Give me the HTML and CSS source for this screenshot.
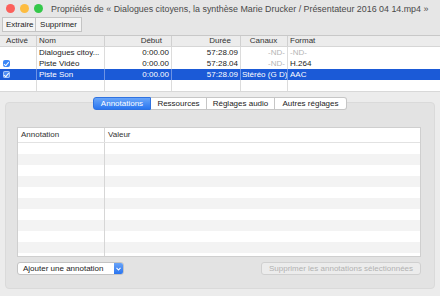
FILE: index.html
```html
<!doctype html>
<html lang="fr">

<head>
    <meta charset="UTF-8" />
    <title>Propriétés</title>
    <link rel="stylesheet" href="styles.css">
</head>

<body>
    <div class="window">
        <div class="titlebar">
            <div class="lights">
                <span class="light red"></span>
                <span class="light yellow"></span>
                <span class="light green"></span>
            </div>
            <div class="title">Propriétés de « Dialogues citoyens, la synthèse Marie Drucker / Présentateur 2016 04 14.mp4 »</div>
        </div>

        <div class="toolbar">
            <button class="tool">Extraire</button><button class="tool">Supprimer</button>
        </div>

        <div class="tracks">
            <div class="track-row head">
                <div class="c-on center">Activé</div>
                <div class="c-name">Nom</div>
                <div class="c-start right">Début</div>
                <div class="c-dur right">Durée</div>
                <div class="c-chan center">Canaux</div>
                <div class="c-fmt">Format</div>
            </div>
            <div class="track-row">
                <div class="c-on"></div>
                <div class="c-name">Dialogues citoy...</div>
                <div class="c-start right">0:00.00</div>
                <div class="c-dur right">57:28.09</div>
                <div class="c-chan right muted">-ND-</div>
                <div class="c-fmt muted">-ND-</div>
            </div>
            <div class="track-row">
                <div class="c-on"><span class="check"></span></div>
                <div class="c-name">Piste Vidéo</div>
                <div class="c-start right">0:00.00</div>
                <div class="c-dur right">57:28.04</div>
                <div class="c-chan right muted">-ND-</div>
                <div class="c-fmt">H.264</div>
            </div>
            <div class="track-row selected">
                <div class="c-on"><span class="check"></span></div>
                <div class="c-name">Piste Son</div>
                <div class="c-start right">0:00.00</div>
                <div class="c-dur right">57:28.09</div>
                <div class="c-chan">Stéréo (G D)</div>
                <div class="c-fmt">AAC</div>
            </div>
            <div class="track-row">
                <div class="c-on"></div>
                <div class="c-name"></div>
                <div class="c-start"></div>
                <div class="c-dur"></div>
                <div class="c-chan"></div>
                <div class="c-fmt"></div>
            </div>
        </div>

        <div class="lower">
            <div class="tabs">
                <span class="tab active">Annotations</span><span class="tab t-res">Ressources</span><span class="tab t-audio">Réglages audio</span><span class="tab t-other">Autres réglages</span>
            </div>
            <div class="group">
                <div class="annots">
                    <div class="annot-row head">
                        <div class="a-key">Annotation</div>
                        <div class="a-val">Valeur</div>
                    </div>
                    <div class="annot-row"><div class="a-key"></div><div class="a-val"></div></div>
                    <div class="annot-row"><div class="a-key"></div><div class="a-val"></div></div>
                    <div class="annot-row"><div class="a-key"></div><div class="a-val"></div></div>
                    <div class="annot-row"><div class="a-key"></div><div class="a-val"></div></div>
                    <div class="annot-row"><div class="a-key"></div><div class="a-val"></div></div>
                    <div class="annot-row"><div class="a-key"></div><div class="a-val"></div></div>
                    <div class="annot-row"><div class="a-key"></div><div class="a-val"></div></div>
                    <div class="annot-row"><div class="a-key"></div><div class="a-val"></div></div>
                    <div class="annot-row"><div class="a-key"></div><div class="a-val"></div></div>
                    <div class="annot-row"><div class="a-key"></div><div class="a-val"></div></div>
                    <div class="annot-row"><div class="a-key"></div><div class="a-val"></div></div>
                </div>
                <div class="actions">
                    <div class="popup">
                        <span class="popup-label">Ajouter une annotation</span>
                        <span class="popup-arrow">
                            <svg width="5" height="4" viewBox="0 0 5 4"><path d="M0.5 0.8 L2.5 3 L4.5 0.8" fill="none" stroke="#fff" stroke-width="1.1"/></svg>
                        </span>
                    </div>
                    <button class="disabled-btn" disabled>Supprimer les annotations sélectionnées</button>
                </div>
            </div>
        </div>
    </div>
</body>

</html>
```

FILE: styles.css
```css
html,
body {
    margin: 0;
    padding: 0;
}

body {
    font-family: "Liberation Sans", Arial, sans-serif;
    font-size: 8px;
    color: #222;
    background: #fff;
}

.window {
    width: 440px;
    height: 296px;
    background: #ececec;
    overflow: hidden;
}

.titlebar {
    display: flex;
    align-items: center;
    height: 17px;
    background: #e6e6e6;
}

.lights {
    display: flex;
    gap: 5px;
    padding-left: 6px;
    margin-top: -1px;
}

.light {
    width: 9px;
    height: 9px;
    border-radius: 50%;
}

.red { background: #fc605b; }
.yellow { background: #fdbc40; }
.green { background: #34c84a; }

.title {
    margin-left: 8px;
    font-size: 8.9px;
    color: #4a4a4a;
    white-space: nowrap;
}

.toolbar {
    height: 18px;
    padding-left: 2px;
    background: #e6e6e6;
    border-bottom: 1px solid #c8c8c8;
}

.tool {
    font-family: inherit;
    font-size: 8px;
    height: 15px;
    margin: 0;
    padding: 0 3px;
    background: #f4f4f4;
    border: 1px solid #c4c4c4;
    color: #222;
}

.tool + .tool {
    border-left: none;
}

.tool:first-child {
    width: 34px;
}

.tool:last-child {
    width: 46px;
}

.tracks {
    background: #fff;
}

.track-row {
    display: grid;
    grid-template-columns: 37px 68px 67px 69px 47px 1fr;
    height: 11px;
    line-height: 11px;
}

.track-row > div {
    border-right: 1px solid #dcdcdc;
    padding: 0 2px;
    white-space: nowrap;
    overflow: hidden;
}

.track-row > div:last-child {
    border-right: none;
}

.track-row > .c-chan {
    padding: 0 2px 0 1px;
}

.track-row.head {
    height: 10px;
    line-height: 10px;
    background: #ececec;
    border-bottom: 1px solid #d6d6d6;
    color: #333;
}

.track-row.head > div {
    border-right-color: #d0d0d0;
}

.track-row.head .c-start,
.track-row.head .c-dur {
    padding-right: 9px;
}

.track-row.selected {
    background: #1b5ad7;
    color: #fff;
}

.track-row.selected > div {
    border-right-color: #6d93e4;
}

.right { text-align: right; }
.center { text-align: center; }
.muted { color: #b5b5b5; }

.c-on {
    display: flex;
    align-items: center;
    padding-left: 3px !important;
}

.track-row.head .c-on {
    display: block;
    padding-left: 0 !important;
}

.check {
    display: inline-block;
    width: 7px;
    height: 7px;
    border-radius: 2px;
    background: #3b87f7;
    position: relative;
}

.selected .check {
    background: #4d8cf4;
    box-shadow: 0 0 0 1px #a8c4f5 inset;
}

.check::after {
    content: "";
    position: absolute;
    left: 2px;
    top: 0.5px;
    width: 2px;
    height: 3.5px;
    border: solid #fff;
    border-width: 0 1.2px 1.2px 0;
    transform: rotate(40deg);
}

.lower {
    padding: 5px 5px 0 5px;
    border-top: 1px solid #d8d8d8;
}

.tabs {
    position: relative;
    z-index: 1;
    display: flex;
    justify-content: center;
    height: 13px;
}

.tab {
    box-sizing: border-box;
    height: 13px;
    line-height: 11px;
    text-align: center;
    background: #fff;
    border: 1px solid #c6c6c6;
    border-left: none;
    font-size: 8px;
    color: #222;
}

.t-res { width: 56px; }
.t-audio { width: 68px; }

.t-other {
    width: 72px;
    border-radius: 0 3px 3px 0;
}

.tab.active {
    width: 58px;
    background: linear-gradient(#6aa6f9, #2a76f0);
    border: 1px solid #2f72e0;
    border-radius: 3px 0 0 3px;
    color: #fff;
}

.group {
    margin-top: -8px;
    height: 187px;
    padding: 24px 13px 0 11px;
    background: #e3e3e3;
    border: 1px solid #dadada;
    border-radius: 4px;
    box-sizing: border-box;
}

.annots {
    height: 130px;
    box-sizing: border-box;
    overflow: hidden;
    background: #fff;
    border: 1px solid #cfcfcf;
}

.annot-row {
    display: grid;
    grid-template-columns: 87px 1fr;
    height: 11px;
}

.annot-row:nth-child(odd) {
    background: #f3f3f3;
}

.annot-row > div:first-child {
    border-right: 1px solid #d6d6d6;
}

.annot-row.head {
    height: 14px;
    line-height: 14px;
    background: #fff;
    border-bottom: 1px solid #e2e2e2;
    color: #333;
}

.annot-row.head > div {
    padding-left: 3px;
}

.actions {
    display: flex;
    justify-content: space-between;
    margin-top: 5px;
}

.popup {
    display: flex;
    width: 107px;
    height: 13px;
    box-sizing: border-box;
    background: #fff;
    border: 1px solid #c3c3c3;
    border-radius: 3px;
    overflow: hidden;
}

.popup-label {
    flex: 1;
    line-height: 11px;
    padding-left: 5px;
    font-size: 8px;
}

.popup-arrow {
    display: flex;
    align-items: center;
    justify-content: center;
    width: 9px;
    background: linear-gradient(#68a3f8, #2a74ef);
}

.disabled-btn {
    font-family: inherit;
    font-size: 8px;
    width: 160px;
    height: 13px;
    margin: 0;
    padding: 0;
    background: #ececec;
    border: 1px solid #d0d0d0;
    border-radius: 3px;
    color: #b2b2b2;
}
```
